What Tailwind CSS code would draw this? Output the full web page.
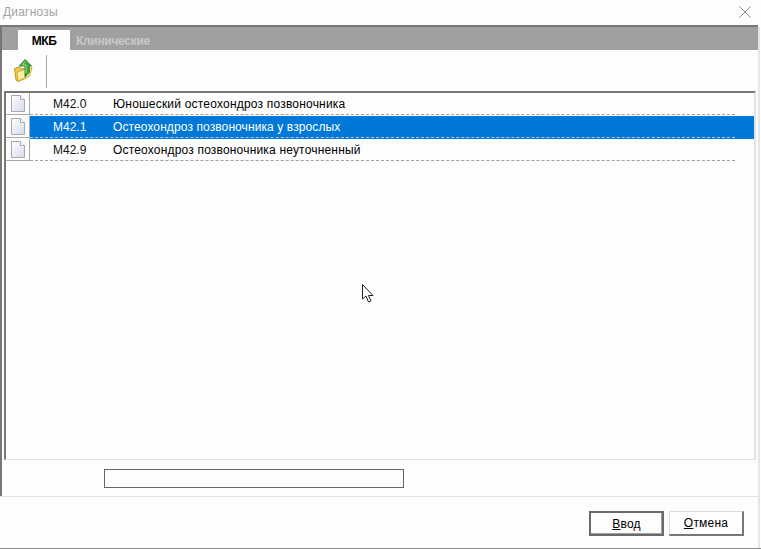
<!DOCTYPE html>
<html lang="en">
<head>
    <meta charset="UTF-8">
    <title>Диагнозы</title>
    <script src="https://cdn.jsdelivr.net/npm/@tailwindcss/browser@4"></script>
</head>
<body class="bg-[#fdfdfd] overflow-hidden">
    <svg width="0" height="0" class="absolute">
        <defs>
            <linearGradient id="doc" x1="0" y1="0" x2="1" y2="1">
                <stop offset="0" stop-color="#ffffff"/>
                <stop offset="1" stop-color="#d5d9ee"/>
            </linearGradient>
        </defs>
    </svg>
    <div class="relative w-[761px] h-[549px] flex flex-col font-['Liberation_Sans',sans-serif] text-[12px] text-black border-b border-[#8c8c8c]">
        <!-- Title bar -->
        <div class="h-[25px] flex items-center justify-between pl-[3px] pr-[10px] pb-[2px] shrink-0">
            <span class="text-[12px] text-[#a3a3a3] tracking-[0.2px]">Диагнозы</span>
            <svg width="12" height="12" viewBox="0 0 12 12"><path d="M0.5 0.5L11.5 11.5M11.5 0.5L0.5 11.5" stroke="#8f8f8f" stroke-width="1" fill="none"/></svg>
        </div>

        <!-- Main panel -->
        <div class="h-[471px] shrink-0 flex flex-col border-t-2 border-l-2 border-[#777] mr-[3px]">
            <!-- Tabs -->
            <div class="h-[23px] bg-[#a0a0a0] flex items-end pl-[16px] shrink-0">
                <div class="w-[52px] h-[20px] pt-[1px] bg-[#fdfdfd] flex items-center justify-center font-bold text-[12px] tracking-[-0.4px] text-black">МКБ</div>
                <div class="h-[20px] pt-[1px] flex items-center pl-[6px] font-bold text-[12px] tracking-[-0.3px] text-[#c8c8c8]">Клинические</div>
            </div>

            <!-- Toolbar -->
            <div class="h-[41px] flex items-start pl-[12px] pt-[5px] shrink-0">
                <svg width="19" height="23" viewBox="0 0 19 23" class="mt-[4px]">
                    <path d="M0.5 9.5L5.5 8L7 10L12 9V19L4 22.5L2 21Z" fill="#f0c850" stroke="#c9941c"/>
                    <path d="M3 13L11 10.5L18 8.5L15.5 17L4 22Z" fill="#fdeea6" stroke="#d9a92e"/>
                    <path d="M11 0.5L17.5 7H15L15.5 13L11 18V7H5.5Z" fill="#45a83a" stroke="#2a8526"/>
                    <path d="M11 2.5L8.5 6H12V14" stroke="#a4e08e" fill="none"/>
                </svg>
                <div class="w-px h-[33px] bg-[#a6a6a6] ml-[13px]"></div>
            </div>

            <!-- List -->
            <div class="ml-[2px] mr-[2px] h-[369px] shrink-0 border-t-2 border-l-2 border-[#777] border-b border-b-[#e3e3e3] border-r-2 border-r-[#e3e3e3]">
                <div class="flex h-[23px]">
                    <div class="w-[24px] h-[22px] border-r border-b border-[#a8a8a8] flex items-center justify-center shrink-0">
                        <svg width="14" height="17" viewBox="0 0 14 17"><path d="M0.5 0.5H9.5L13.5 4.5V16.5H0.5Z" fill="url(#doc)" stroke="#a9a9a9"/><path d="M9.5 0.5V4.5H13.5" fill="#fff" stroke="#a9a9a9"/></svg>
                    </div>
                    <div class="flex-1 flex h-[22px] items-center">
                        <div class="w-[83px] pl-[23px] shrink-0 text-[#111]">М42.0</div>
                        <div class="flex-1 h-full flex items-center tracking-[0.2px] border-b border-dashed border-[#a0a0a0] mr-[19px] -ml-[83px] pl-[83px]">Юношеский остеохондроз позвоночника</div>
                    </div>
                </div>
                <div class="flex h-[23px]">
                    <div class="w-[24px] h-[22px] border-r border-b border-[#a8a8a8] flex items-center justify-center shrink-0">
                        <svg width="14" height="17" viewBox="0 0 14 17"><path d="M0.5 0.5H9.5L13.5 4.5V16.5H0.5Z" fill="url(#doc)" stroke="#a9a9a9"/><path d="M9.5 0.5V4.5H13.5" fill="#fff" stroke="#a9a9a9"/></svg>
                    </div>
                    <div class="flex-1 h-[23px] bg-[#0078d7] text-white">
                        <div class="flex h-[22px] items-center">
                            <div class="w-[83px] pl-[23px] shrink-0">М42.1</div>
                            <div class="flex-1 h-full flex items-center tracking-[0.1px] border-b border-dashed border-[#a0c8e8] mr-[19px] -ml-[83px] pl-[83px]">Остеохондроз позвоночника у взрослых</div>
                        </div>
                    </div>
                </div>
                <div class="flex h-[23px]">
                    <div class="w-[24px] h-[22px] border-r border-b border-[#a8a8a8] flex items-center justify-center shrink-0">
                        <svg width="14" height="17" viewBox="0 0 14 17"><path d="M0.5 0.5H9.5L13.5 4.5V16.5H0.5Z" fill="url(#doc)" stroke="#a9a9a9"/><path d="M9.5 0.5V4.5H13.5" fill="#fff" stroke="#a9a9a9"/></svg>
                    </div>
                    <div class="flex-1 flex h-[22px] items-center">
                        <div class="w-[83px] pl-[23px] shrink-0 text-[#111]">М42.9</div>
                        <div class="flex-1 h-full flex items-center tracking-[0.18px] border-b border-dashed border-[#a0a0a0] mr-[19px] -ml-[83px] pl-[83px]">Остеохондроз позвоночника неуточненный</div>
                    </div>
                </div>
            </div>

            <!-- Search field -->
            <div class="flex-1 pl-[102px] pt-[9px]">
                <div class="w-[300px] h-[19px] border border-[#666] bg-[#fdfdfd]"></div>
            </div>
        </div>

        <!-- Footer -->
        <div class="flex-1 border-t border-[#e3e3e3] mr-[3px] flex justify-end items-start pt-[14px] pr-[14px] gap-[5px]">
            <button class="w-[75px] h-[25px] bg-[#fdfdfd] border-2 border-[#6a6a6a] shadow-[inset_-1px_-1px_0_#a0a0a0] text-[12px] tracking-[0.2px]"><span class="underline">В</span>вод</button>
            <button class="w-[75px] h-[25px] bg-[#fdfdfd] border border-[#dcdcdc] border-r-2 border-b-2 border-r-[#777] border-b-[#777] text-[12px] tracking-[0.2px]"><span class="underline">О</span>тмена</button>
        </div>

        <!-- Mouse pointer over the dialog -->
        <svg class="absolute left-[362px] top-[284px]" width="13" height="20" viewBox="0 0 13 20"><path d="M0.5 0.5V15L4 12L6.5 18L9 17L6.5 11.5H11Z" fill="#fff" stroke="#222" stroke-width="1"/></svg>
        <div class="absolute left-[758px] top-[27px] bottom-0 w-[2px] bg-[#e6e6e6]"></div>
    </div>
</body>
</html>
